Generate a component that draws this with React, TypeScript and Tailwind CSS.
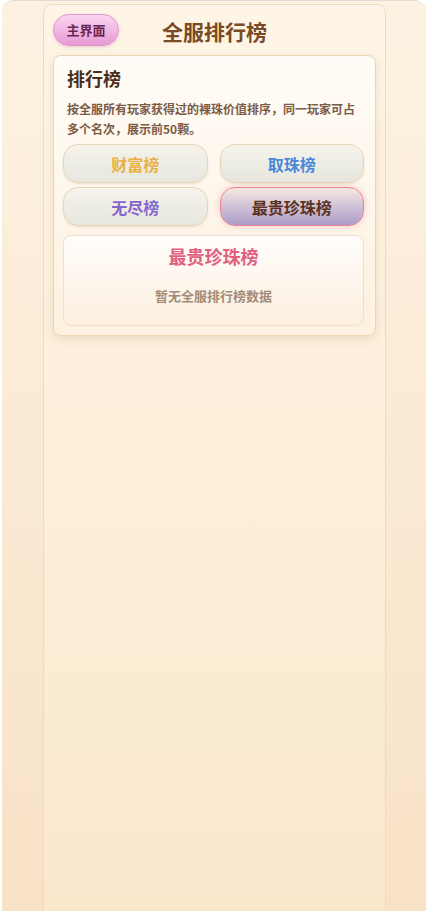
import React from "react";

const font = { fontFamily: '"Noto Sans CJK SC", "Noto Sans", sans-serif' };

export default function App() {
  const tabs = [
    { label: "财富榜", color: "text-[#e9b144]", active: false },
    { label: "取珠榜", color: "text-[#4a88d6]", active: false },
    { label: "无尽榜", color: "text-[#8566cc]", active: false },
    { label: "最贵珍珠榜", color: "text-[#5b321f]", active: true },
  ];
  return (
    <div className="min-h-[911px] bg-white pl-[2px] pr-[2px]" style={font}>
      <div className="min-h-[911px] rounded-t-[12px] border-t border-[#e4ddd5] bg-gradient-to-b from-[#fdf2e2] to-[#f8e2c7] pl-[41px] pr-[40px] pt-[3px] flex flex-col">
        <div className="flex-1 rounded-t-[9px] border border-b-0 border-[#eedbbd] bg-gradient-to-b from-[#fef5e6] to-[#fae8cd] px-[9px] pt-[9px]">
          <div className="grid grid-cols-[1fr_auto_1fr] items-center h-[32px]">
            <div>
              <button className="h-[32px] w-[66px] rounded-full border border-[#df98cd] bg-gradient-to-b from-[#fad5f0] to-[#e69ad4] text-[13px] font-bold text-[#6a2653] shadow-[0_1px_3px_rgba(200,120,170,0.35)]">
                主界面
              </button>
            </div>
            <div className="pt-[3px] text-[21px] font-bold leading-none text-[#7a4a26]">全服排行榜</div>
            <div />
          </div>
          <div className="mt-[9px] rounded-[8px] border border-[#ecd5b2] bg-gradient-to-b from-[#fffcf7] to-[#fdf1df] pl-[9px] pr-[11px] pt-[10px] pb-[9px] shadow-[0_3px_8px_rgba(190,150,100,0.25)]">
            <div className="pl-[4px] text-[18px] font-bold leading-[24px] text-[#4a2d1b]">排行榜</div>
            <div className="mt-[9px] pl-[4px] pr-[4px] text-[12px] font-bold leading-[20px] text-[#7c5b45]">
              按全服所有玩家获得过的裸珠价值排序，同一玩家可占多个名次，展示前50颗。
            </div>
            <div className="mt-[5px] grid grid-cols-2 gap-x-[12px] gap-y-[4px]">
              {tabs.map((t) => (
                <button
                  key={t.label}
                  className={
                    t.active
                      ? "h-[39px] rounded-[15px] border border-[#ec8496] bg-gradient-to-b from-[#f6e9e2] to-[#ab9cc8] text-[16px] font-bold text-[#5b321f] shadow-[0_0_6px_rgba(240,130,150,0.45)]"
                      : "h-[39px] rounded-[15px] border border-[#e6d6b8] bg-gradient-to-b from-[#f5f3ec] to-[#e7e7de] text-[16px] font-bold shadow-[0_1px_2px_rgba(180,160,120,0.25)] " + t.color
                  }
                >
                  {t.label}
                </button>
              ))}
            </div>
            <div className="mt-[9px] h-[91px] rounded-[8px] border border-[#f1ddcd] bg-gradient-to-b from-[#fffdfb] to-[#fcefdf] flex flex-col items-center pt-[8px]">
              <div className="text-[18px] font-bold leading-[24px] text-[#e0607f]">最贵珍珠榜</div>
              <div className="mt-[19px] text-[13px] font-bold leading-[18px] text-[#a38b78]">暂无全服排行榜数据</div>
            </div>
          </div>
        </div>
      </div>
    </div>
  );
}
